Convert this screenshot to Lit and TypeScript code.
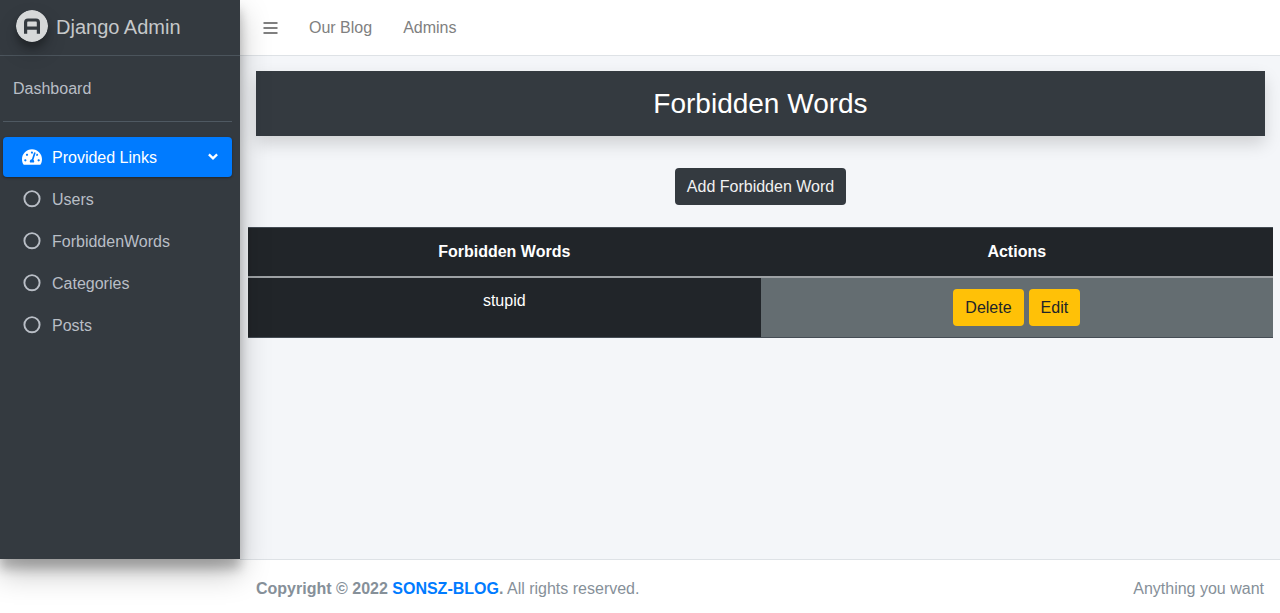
import { LitElement, html, css, svg } from "lit";
import { customElement } from "lit/decorators.js";

const gaugePath =
  "M288 32C128.94 32 0 160.94 0 320c0 52.8 14.25 102.26 39.06 144.8 5.61 9.62 16.3 15.2 27.44 15.2h443c11.14 0 21.83-5.58 27.44-15.2C561.75 422.26 576 372.8 576 320c0-159.06-128.94-288-288-288zm0 64c14.71 0 26.58 10.13 30.32 23.65-1.11 2.26-2.64 4.23-3.45 6.67l-9.22 27.67c-5.13 3.49-10.97 6.01-17.64 6.01-17.67 0-32-14.33-32-32S270.33 96 288 96zM96 384c-17.67 0-32-14.33-32-32s14.33-32 32-32 32 14.33 32 32-14.33 32-32 32zm48-160c-17.67 0-32-14.33-32-32s14.33-32 32-32 32 14.33 32 32-14.33 32-32 32zm246.77-72.41l-61.33 184C343.13 347.33 352 364.54 352 384c0 11.72-3.38 22.55-8.88 32H232.88c-5.5-9.45-8.88-20.28-8.88-32 0-33.94 26.5-61.43 59.9-63.59l61.34-184.01c4.17-12.56 17.73-19.45 30.36-15.17 12.57 4.19 19.35 17.79 15.17 30.36zm14.66 57.2l15.52-46.55c3.47-1.29 7.13-2.23 11.05-2.23 17.67 0 32 14.33 32 32s-14.33 32-32 32c-11.38-.01-20.89-6.28-26.57-15.22zM480 384c-17.67 0-32-14.33-32-32s14.33-32 32-32 32 14.33 32 32-14.33 32-32 32z";

const ring = svg`<circle cx="10" cy="9.7" r="7.6" fill="none" stroke="currentColor" stroke-width="1.9"></circle>`;

@customElement("app-root")
export class AppRoot extends LitElement {
  static styles = css`
    :host {
      display: block;
      font: 16px/24px "Liberation Sans", Arial, sans-serif;
      color: #212529;
    }
    * {
      box-sizing: border-box;
    }
    a {
      text-decoration: none;
      color: inherit;
    }
    svg {
      display: block;
      flex: none;
    }
    .page {
      display: grid;
      grid-template-columns: 240px minmax(0, 1fr);
      grid-template-rows: 1fr auto;
      min-height: 100vh;
      background: #fff;
    }
    .sidebar {
      position: relative;
      z-index: 2;
      background: #343a40;
      color: #b9bec6;
      box-shadow: 0 14px 28px rgba(0, 0, 0, 0.25), 0 10px 10px rgba(0, 0, 0, 0.22);
    }
    .brand {
      display: flex;
      align-items: center;
      gap: 8px;
      height: 56px;
      padding: 0 16px 3px;
      border-bottom: 1px solid #4b545c;
      font-size: 20px;
      color: #c6c8ca;
    }
    .logo {
      border-radius: 50%;
      box-shadow: 0 6px 6px rgba(0, 0, 0, 0.23), 0 10px 20px rgba(0, 0, 0, 0.19);
    }
    .menu {
      padding: 0 8px 0 3px;
    }
    .dashboard {
      padding: 21px 10px 20px;
      margin-bottom: 15px;
      border-bottom: 1px solid #4f5962;
    }
    .dashboard a {
      display: block;
    }
    .links {
      list-style: none;
      margin: 0;
      padding: 0;
      display: grid;
      gap: 2px;
    }
    .link {
      display: flex;
      align-items: center;
      gap: 10px;
      width: 100%;
      height: 40px;
      padding: 0 14px 0 19px;
      border: 0;
      border-radius: 4px;
      background: none;
      font: inherit;
      color: inherit;
      text-align: left;
    }
    .link.active {
      background: #007bff;
      color: #fff;
      box-shadow: 0 1px 3px rgba(0, 0, 0, 0.12), 0 1px 2px rgba(0, 0, 0, 0.24);
    }
    .label {
      flex: 1;
      padding-top: 2px;
    }
    .main {
      background: #f4f6f9;
    }
    .navbar {
      display: flex;
      align-items: center;
      gap: 31px;
      height: 56px;
      padding: 0 23px;
      background: #fff;
      border-bottom: 1px solid #dee2e6;
      color: #808080;
    }
    .toggle {
      padding: 0;
      border: 0;
      background: none;
      color: inherit;
    }
    .content {
      padding: 15px 7px 0 8px;
    }
    .title {
      margin: 0 8px;
      padding: 16px;
      background: #343a40;
      color: #fff;
      font-size: 28px;
      font-weight: 400;
      line-height: 33px;
      text-align: center;
      box-shadow: 0 8px 16px rgba(0, 0, 0, 0.15);
    }
    .add {
      display: flex;
      justify-content: center;
      padding: 32px 0 22px;
    }
    .btn {
      height: 37px;
      padding: 0 12px;
      border: 0;
      border-radius: 4px;
      font: inherit;
    }
    .dark {
      background: #343a40;
      color: #f1f1f1;
    }
    .warning {
      background: #ffc107;
      color: #212529;
    }
    .words {
      width: 100%;
      table-layout: fixed;
      border-collapse: collapse;
      background: #212529;
      color: #fff;
      text-align: center;
    }
    .words th {
      padding: 12px;
      border-top: 1px solid #454d55;
      border-bottom: 2px solid #9da1a4;
    }
    .words td {
      padding: 11px 12px;
      vertical-align: top;
      border-bottom: 1px solid #454d55;
    }
    .words .actions {
      background: #646d71;
    }
    .buttons {
      display: flex;
      justify-content: center;
      gap: 5px;
    }
    .footer {
      grid-column: 2;
      display: flex;
      justify-content: space-between;
      padding: 17px 16px 12px;
      background: #fff;
      border-top: 1px solid #dee2e6;
      color: #869099;
    }
    .footer a {
      color: #007bff;
    }
  `;

  private links = ["Users", "ForbiddenWords", "Categories", "Posts"];
  private words = ["stupid"];

  render() {
    return html`
      <div class="page">
        <aside class="sidebar">
          <a class="brand" href="#">
            <svg class="logo" width="32" height="32" viewBox="0 0 32 32" aria-hidden="true">
              <circle cx="16" cy="16" r="16" fill="#d6d8d9"></circle>
              <path d="M9.6 23.8V12.4Q9.6 10 12 10H20Q22.4 10 22.4 12.4V23.8M9.6 18.2H22.4" fill="none" stroke="#343a40" stroke-width="3.2"></path>
            </svg>
            <span class="label">Django Admin</span>
          </a>
          <nav class="menu">
            <div class="dashboard"><a href="#">Dashboard</a></div>
            <ul class="links">
              <li>
                <button class="link active" aria-expanded="true">
                  <svg width="20" height="18" viewBox="0 0 576 512" aria-hidden="true"><path d=${gaugePath} fill="currentColor"></path></svg>
                  <span class="label">Provided Links</span>
                  <svg width="10" height="10" viewBox="0 0 10 10" aria-hidden="true"><path d="M.9 2.4L5 6.4L9.1 2.4" fill="none" stroke="currentColor" stroke-width="2.3"></path></svg>
                </button>
              </li>
              ${this.links.map(
                (name) => html`<li>
                  <a class="link" href="#">
                    <svg width="20" height="20" viewBox="0 0 20 20" aria-hidden="true">${ring}</svg>
                    <span class="label">${name}</span>
                  </a>
                </li>`
              )}
            </ul>
          </nav>
        </aside>
        <div class="main">
          <nav class="navbar">
            <button class="toggle" aria-label="Toggle menu">
              <svg width="15" height="14" viewBox="0 0 15 14" aria-hidden="true"><path d="M.5 2H14.5M.5 7H14.5M.5 12H14.5" stroke="currentColor" stroke-width="2"></path></svg>
            </button>
            <a href="#">Our Blog</a>
            <a href="#">Admins</a>
          </nav>
          <main class="content">
            <h1 class="title">Forbidden Words</h1>
            <div class="add"><button class="btn dark">Add Forbidden Word</button></div>
            <table class="words">
              <thead>
                <tr><th scope="col">Forbidden Words</th><th scope="col">Actions</th></tr>
              </thead>
              <tbody>
                ${this.words.map(
                  (word) => html`<tr>
                    <td>${word}</td>
                    <td class="actions">
                      <div class="buttons">
                        <button class="btn warning">Delete</button>
                        <button class="btn warning">Edit</button>
                      </div>
                    </td>
                  </tr>`
                )}
              </tbody>
            </table>
          </main>
        </div>
        <footer class="footer">
          <span><strong>Copyright © 2022 <a href="#">SONSZ-BLOG</a>.</strong> All rights reserved.</span>
          <span>Anything you want</span>
        </footer>
      </div>
    `;
  }
}
